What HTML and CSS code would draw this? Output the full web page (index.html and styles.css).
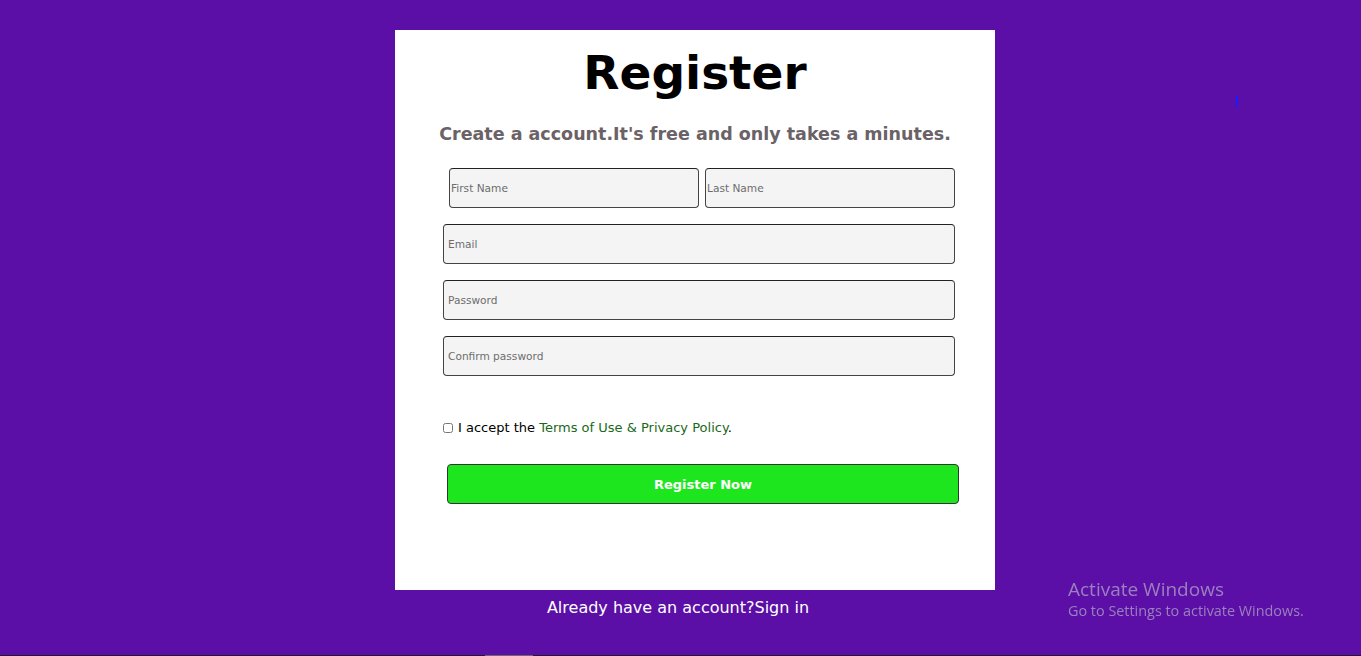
FILE: index.html
```html
<!DOCTYPE html>
<html lang="en">
<head>
<meta charset="utf-8">
<title>Register</title>
<link rel="stylesheet" href="styles.css">
</head>
<body>
<main class="page">
  <section class="card">
    <h1 class="title">Register</h1>
    <p class="subtitle">Create a account.It's free and only takes a minutes.</p>
    <form class="form">
      <div class="name-row">
        <input class="field field-name" type="text" placeholder="First Name">
        <input class="field field-name" type="text" placeholder="Last Name">
      </div>
      <input class="field field-wide" type="email" placeholder="Email">
      <input class="field field-wide" type="password" placeholder="Password">
      <input class="field field-wide" type="password" placeholder="Confirm password">
      <label class="terms">
        <input class="check" type="checkbox">
        <span>I accept the <a class="link" href="#">Terms of Use</a> <span class="link">&amp;</span> <a class="link" href="#">Privacy Policy</a>.</span>
      </label>
      <button class="submit" type="button">Register Now</button>
    </form>
  </section>
  <p class="signin">Already have an account?Sign in</p>
</main>
<span class="cursor"></span>
<div class="watermark">
  <div class="wm-title">Activate Windows</div>
  <div class="wm-sub">Go to Settings to activate Windows.</div>
</div>
<div class="bottom-edge"><span class="edge-thumb"></span></div>
</body>
</html>
```

FILE: styles.css
```css
* { box-sizing: border-box; }

html, body {
  margin: 0;
  padding: 0;
  height: 100%;
  overflow: hidden;
}

body {
  background: #5c0fa6;
  font-family: "DejaVu Sans", Verdana, sans-serif;
}

.page {
  padding-top: 30px;
  display: flex;
  flex-direction: column;
}

.card {
  margin-left: 395px;
  width: 600px;
  height: 560px;
  background: #ffffff;
  display: flex;
  flex-direction: column;
  align-items: center;
}

.title {
  margin: 13px 0 0;
  font-size: 47px;
  line-height: 60px;
  font-weight: bold;
  color: #000;
}

.subtitle {
  margin: 20px 0 0;
  font-size: 17.5px;
  line-height: 22px;
  font-weight: bold;
  color: #6a6266;
}

.form {
  width: 512px;
  margin-top: 23px;
  margin-left: 8px;
  display: flex;
  flex-direction: column;
}

.name-row {
  display: flex;
  gap: 6px;
  padding-left: 6px;
}

.field {
  height: 40px;
  border: 1px solid #444;
  border-top-color: #222;
  border-radius: 4px;
  background: #f4f4f4;
  font-family: "DejaVu Sans", Verdana, sans-serif;
  font-size: 10.6px;
  color: #333;
  outline: none;
}

.field::placeholder {
  color: #6d6d6d;
}

.field-name {
  width: 250px;
  padding: 0 1px;
}

.field-wide {
  width: 512px;
  margin-top: 16px;
  padding: 0 4px;
}

.terms {
  margin-top: 44px;
  display: flex;
  align-items: center;
  gap: 5px;
  font-size: 13px;
  color: #000;
}

.check {
  margin: 1px 0 0;
  width: 10px;
  height: 10px;
}

.link {
  color: #19691a;
  text-decoration: none;
}

.submit {
  margin-top: 29px;
  margin-left: 4px;
  width: 512px;
  height: 40px;
  border: 1px solid #333;
  border-radius: 4px;
  background: #1ee61e;
  color: #ffffff;
  font-family: "DejaVu Sans", Verdana, sans-serif;
  font-size: 13px;
  font-weight: bold;
}

.signin {
  margin: 7px 0 0;
  text-align: center;
  padding-right: 5px;
  font-size: 16px;
  line-height: 22px;
  color: #ffffff;
}

.cursor {
  position: absolute;
  left: 1236px;
  top: 96px;
  width: 2px;
  height: 11px;
  background: #1a1aff;
}

.watermark {
  position: fixed;
  left: 1068px;
  top: 577px;
  font-family: "Open Sans", "Noto Sans", sans-serif;
  color: #9a80bf;
}

.wm-title {
  font-size: 19px;
  line-height: 24px;
}

.wm-sub {
  font-size: 14.4px;
  line-height: 20px;
}

.bottom-edge {
  position: fixed;
  left: 0;
  right: 0;
  bottom: 0;
  height: 1px;
  background: #2a1436;
}

.edge-thumb {
  position: absolute;
  left: 485px;
  width: 48px;
  height: 1px;
  background: #6a6a6a;
}
```
